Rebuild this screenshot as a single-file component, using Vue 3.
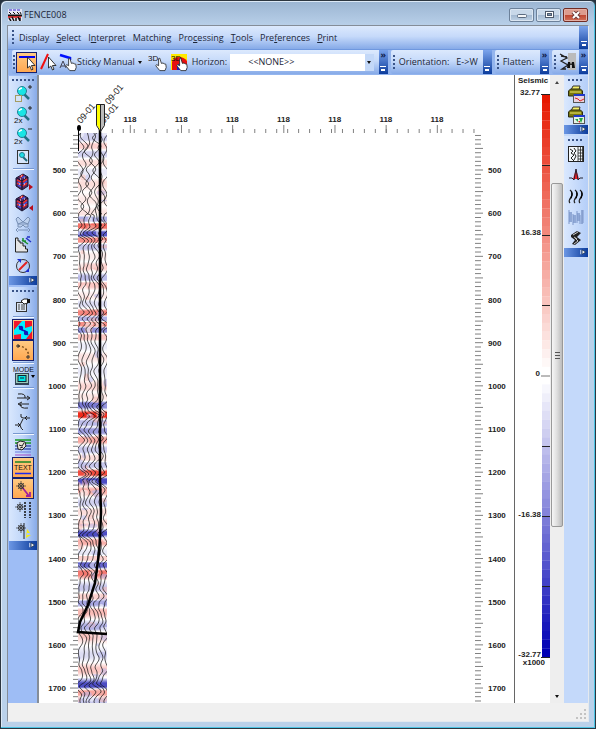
<template>
  <div class="window">
    <header class="titlebar">
      <svg class="logo" viewBox="0 0 14 12" v-html="icons.logo"></svg>
      <h1 class="title">FENCE008</h1>
      <button class="wbtn" aria-label="Minimize">
        <svg viewBox="0 0 12 8"><rect x="1.500" y="3.500" width="9" height="3" rx="1" fill="#f4f6f8" stroke="#5b6b80" /></svg>
      </button>
      <button class="wbtn" aria-label="Maximize">
        <svg viewBox="0 0 12 8"><rect x="2.500" y=".5" width="8" height="6" fill="#fff" stroke="#4d5a6c" /><rect x="4.500" y="2.500" width="4" height="2" fill="#7c93ad" stroke="#4d5a6c" /></svg>
      </button>
      <button class="wbtn close" aria-label="Close">
        <svg viewBox="0 0 12 8"><path d="M3 1l6 6M9 1L3 7" stroke="#6d3a38" stroke-width="4" /><path d="M3 1l6 6M9 1L3 7" stroke="#fff" stroke-width="2" /></svg>
      </button>
    </header>

    <div class="client">
      <nav class="menubar">
        <span class="grip"></span>
        <button v-for="m in menus" :key="m.join('')" class="menu">{{ m[0] }}<u>{{ m[1] }}</u>{{ m[2] }}</button>
        <button class="more" aria-label="Menu options"><i></i></button>
      </nav>

      <div class="toolrow">
        <div class="toolbar grow">
          <span class="grip"></span>
          <button class="tool on" aria-label="Pick horizon"><svg viewBox="0 0 18 18" v-html="icons.pick"></svg></button>
          <button class="tool" aria-label="Pick fault"><svg viewBox="0 0 18 18" v-html="icons.fault"></svg></button>
          <button class="tool sticky"><svg viewBox="0 0 18 18" v-html="icons.sticky"></svg>Sticky Manual<i class="down"></i></button>
          <button class="tool" aria-label="3D pick"><svg viewBox="0 0 18 18" v-html="icons.hand3d"></svg></button>
          <button class="tool" aria-label="3D map pick"><svg viewBox="0 0 18 18" v-html="icons.map3d"></svg></button>
          <label class="lbl" for="horizon">Horizon:</label>
          <span class="combo">
            <select id="horizon"><option>&lt;&lt;NONE&gt;&gt;</option></select>
            <i class="down"></i>
          </span>
          <button class="more" aria-label="More tools"><b>»</b><i></i></button>
        </div>
        <div class="toolbar">
          <span class="grip"></span>
          <button class="tool orient">Orientation:<span>E-&gt;W</span></button>
          <button class="more" aria-label="Orientation options"><i></i></button>
        </div>
        <div class="toolbar">
          <span class="grip"></span>
          <button class="tool flat">Flatten:</button>
          <button class="more" aria-label="Flatten options"><b>»</b><i></i></button>
        </div>
        <div class="toolbar">
          <span class="grip"></span>
          <button class="tool find" aria-label="Find"><svg viewBox="0 0 18 18" v-html="icons.find"></svg></button>
          <button class="more" aria-label="Find options"><b>»</b><i></i></button>
        </div>
      </div>

      <main class="body">
        <aside class="side left">
          <div v-for="(bar, b) in leftBars" :key="b" class="vbar">
            <span class="hgrip"></span>
            <template v-for="(name, i) in bar" :key="i">
              <hr v-if="name === '-'" />
              <button v-else class="vtool" :class="{ on: active.includes(name) }" :aria-label="name">
                <svg viewBox="0 0 18 18" v-html="icons[name]"></svg>
              </button>
            </template>
            <button class="vmore" aria-label="Toolbar options"><svg viewBox="0 0 8 8" v-html="icons.more"></svg></button>
          </div>
        </aside>

        <section class="chart">
          <svg viewBox="39 75 475 628">
            <defs>
              <linearGradient id="amp" gradientUnits="userSpaceOnUse" x1="0" y1="133" x2="0" y2="703">
                <stop v-for="(s, i) in stops" :key="i" :offset="s.at" :stop-color="s.color" />
              </linearGradient>
              <clipPath id="section"><rect x="78" y="133" width="29" height="570" /></clipPath>
            </defs>

            <g stroke="#808080">
              <path :d="sideTicks" />
              <path :d="topTicks" />
            </g>
            <g class="axis">
              <template v-for="v in depths" :key="v">
                <text x="66" :y="yOf(v) + 3" text-anchor="end">{{ v }}</text>
                <text x="488" :y="yOf(v) + 3">{{ v }}</text>
              </template>
              <text v-for="n in 7" :key="n" :x="130 + (n - 1) * 51.17" y="122" text-anchor="middle">118</text>
            </g>

            <g clip-path="url(#section)">
              <rect x="78" y="133" width="29" height="570" fill="url(#amp)" />
              <ellipse v-for="(s, i) in spots" :key="i" :cx="s.x" :cy="s.y" :rx="s.rx" :ry="s.ry" :fill="s.fill" opacity=".5" />
              <path v-for="(d, i) in traces" :key="i" :d="d" fill="none" stroke="#111" stroke-width=".7" />
            </g>

            <path d="M78.500 126v25" stroke="#000" />
            <ellipse cx="79" cy="128" rx="2" ry="3" />
            <g class="well-name">
              <text transform="translate(81 124) rotate(-50)">09-01</text>
              <text transform="translate(104 124) rotate(-50)">09-01</text>
              <text transform="translate(109 105) rotate(-50)">09-01</text>
            </g>
            <path d="M100 128V480L101 512L100 537L99 553L95 583L88 605L80 622L78 632L107 634" fill="none" stroke="#000" stroke-width="2.500" />
            <path d="M96.500 104.500h8v21l-4 6-4-6z" fill="#bbb" stroke="#222" />
            <path d="M97 105h3v25l-3-5z" fill="#ff0" />
            <path d="M100.500 105v26" stroke="#222" />
          </svg>
        </section>

        <section class="legend">
          <svg viewBox="515 75 35 628">
            <rect v-for="(c, i) in scale" :key="i" x="542" :y="94 + i * 8.8" width="8" height="9" :fill="c" />
            <path d="M541 94.500h9M542 165.500h8M542 235.500h8M542 305.500h8M542 446.500h8M542 516.500h8M542 586.500h8M541 657.500h9" stroke="#222" />
            <path d="M541 376h9" stroke="#777" />
            <g class="axis">
              <text x="518" y="83">Seismic</text>
              <text x="540" y="95" text-anchor="end">32.77</text>
              <text x="541" y="235" text-anchor="end">16.38</text>
              <text x="540" y="376" text-anchor="end">0</text>
              <text x="541" y="517" text-anchor="end">-16.38</text>
              <text x="541" y="657" text-anchor="end">-32.77</text>
              <text x="545" y="665" text-anchor="end">x1000</text>
            </g>
          </svg>
        </section>

        <div class="scroll">
          <button aria-label="Scroll up"><i class="up"></i></button>
          <div class="track"><div class="thumb"><span></span></div></div>
          <button aria-label="Scroll down"><i class="down"></i></button>
        </div>

        <aside class="side right">
          <div v-for="(bar, b) in rightBars" :key="b" class="vbar">
            <span class="hgrip"></span>
            <button v-for="name in bar" :key="name" class="vtool" :aria-label="name">
              <svg viewBox="0 0 18 18" v-html="icons[name]"></svg>
            </button>
            <button class="vmore" aria-label="Toolbar options"><svg viewBox="0 0 8 8" v-html="icons.more"></svg></button>
          </div>
        </aside>
      </main>

      <footer class="status">
        <svg viewBox="0 0 10 10"><path d="M8 0h2v2H8zM8 4h2v2H8zM8 8h2v2H8zM4 4h2v2H4zM4 8h2v2H4zM0 8h2v2H0z" fill="#c3c3c3" /></svg>
      </footer>
    </div>
  </div>
</template>

<script setup>
const menus = [
  ['', '', 'Display'], ['', 'S', 'elect'], ['I', 'n', 'terpret'], ['Matchin', 'g', ''],
  ['Pro', 'c', 'essing'], ['', 'T', 'ools'], ['Pre', 'f', 'erences'], ['', 'P', 'rint'],
]

const leftBars = [
  ['zoomArea', 'zoomIn', 'zoomOut', 'zoomFit', '-', 'cubeNext', 'cubePrev', 'flip', 'stairs', 'rotate'],
  ['props', '-', 'colour', 'arc', '-', 'mode', '-', 'swap', 'squeeze', '-', 'layers', 'text', 'wellPath', 'wellGrid', 'wellMark'],
]
const rightBars = [
  ['printLine', 'printMap'],
  ['sectionView', 'spike', 'wiggle', 'bars', 'fold'],
]
const active = ['colour', 'arc', 'text', 'wellPath']

// small pieces shared by several icons
const hand = '<path transform="translate(4 4) scale(.8)" d="M8.500 17l-5-6 1-1.500 2.500 1.500V2l1.500-.5L10.500 8l2-.5 1.500 1 2 .5.5 4-1.500 4z" fill="#fff" stroke="#222"/>'
const arrow = '<path d="M9.500 4v11l2.300-2 1.700 4 1.500-.8-1.600-3.700H17z" fill="#fff" stroke="#222" stroke-width=".9"/>'
const lens = '<path d="M10 9l5 5" stroke="#237085" stroke-width="2.500"/><circle cx="8" cy="6" r="4.500" fill="#19e5e5" stroke="#257f92"/><path d="M5 5q1-2 3-2" stroke="#fff" stroke-width="1.500" fill="none"/>'
const cube = '<path d="M2 5l7-4 5 3v9l-6 4-6-4z" fill="#53265f" stroke="#161632"/><path d="M3 5l5 3v8M8 8l6-4" stroke="#101028" fill="none"/><path d="M3 7l4 2M3 10l4 2M9 9l4-3M9 13l4-3M6 4l3-2" stroke="#e33131" stroke-width="1.600"/><path d="M4 9l3 2M9 11l4-3M8 5l3-2M4 12l3 2" stroke="#3d57ea" stroke-width="1.200"/><path d="M6 6h1M10 5h1M5 11h1M10 11h1M7 3h1" stroke="#fff"/>'
const gun = (x, y) => `<circle cx="${x}" cy="${y}" r="2.500" fill="none" stroke="#333"/><path d="M${x - 5} ${y}h10M${x} ${y - 5}v10M${x - 3} ${y - 3}l6 6M${x + 3} ${y - 3}l-6 6" stroke="#333" stroke-width=".7"/>`
const printer = '<path d="M4 5l2-4h7l-1 4" fill="#f5f06b" stroke="#333"/><path d="M1.500 6l2-2h10l2 2v5h-14z" fill="#77760f" stroke="#2b2b12"/><path d="M3 7h11" stroke="#f7f16a"/>'
const t = (x, y, size, s, fill = '#111') => `<text x="${x}" y="${y}" font-family="Liberation Sans, sans-serif" font-size="${size}" fill="${fill}">${s}</text>`

const icons = {
  logo: '<rect width="14" height="12" fill="#e6e6f6"/><path d="M1 1h12" stroke="#32c" stroke-dasharray="3 1"/><path d="M1 3l2 2M5 3l2 2M9 3l2 2M12 3l1 2" stroke="#111"/><path d="M0 6.500h14" stroke="#111" stroke-width="2"/><path d="M0 8h13" stroke="#d11" stroke-width="1.500"/><path d="M1 9l2 3M4 8l2 4M8 9v3M10 8l2 4M12 9v3" stroke="#111" stroke-width="1.500"/>',
  pick: '<path d="M1 4h16" stroke="#0000f0" stroke-width="2"/>' + arrow,
  fault: '<path d="M2 16L9 1" stroke="#f01010" stroke-width="2"/>' + arrow,
  sticky: '<path d="M1 2l10 3v2" stroke="#0010ff" stroke-width="2.500" fill="none"/><path d="M1 15l3-7 3 7M2 13h4" stroke="#445" fill="none"/>' + hand,
  hand3d: t(-1, 8, 8, '3D') + hand,
  map3d: '<path d="M1 1h16v16H1z" fill="#ffea00"/><path d="M2 17V9q2-5 7-5t8 4v9z" fill="#e81010"/><path d="M7 17v-4q2-4 6-2l4 3v3z" fill="#1b18c8"/>' + t(1, 8, 8, '3D') + hand,
  find: '<rect x="9" y="0" width="8" height="17" fill="#bbb"/><path d="M1 1l7 4-6 3 7 4-6 4h4M2 3l6 1" stroke="#222" fill="none" stroke-width="1.300"/><path d="M8 15l1-6h2l1 3 1-3h2l1 6h-3v-3h-2v3z" fill="#111"/>',
  more: '<path d="M1.500 1v5" stroke="#fff"/><path d="M3 1l4 2.500L3 6z" fill="#fff" stroke="#123" stroke-width=".7"/>',
  zoomArea: lens + '<path d="M14 2h4M16 0v4" stroke="#222"/><rect x="1.500" y="10.500" width="6" height="6" fill="#d4e3f5" stroke="#a59c62"/>',
  zoomIn: lens + '<path d="M14 2h4M16 0v4" stroke="#222"/>' + t(0, 17, 8, '2x'),
  zoomOut: lens + '<path d="M14 2h4" stroke="#222"/>' + t(0, 17, 8, '2x'),
  zoomFit: '<rect x="3.500" y="2.500" width="11" height="13" fill="#d7e6fa" stroke="#333"/><path d="M9 9l4 4" stroke="#206a7c" stroke-width="2"/><circle cx="8" cy="7" r="2.500" fill="#20dfe8" stroke="#257f92"/>',
  cubeNext: cube + '<path d="M15 11l4 3-4 3z" fill="#b80e1d"/>',
  cubePrev: cube + '<path d="M19 11l-4 3 4 3z" fill="#b80e1d"/>',
  flip: '<path d="M9 7L4 2 2 4l2 5 5-2 5 2 2-5-2-2zM7 9H4v3h3l2-2 2 2h3V9h-3z" fill="#bdd1ee" stroke="#7890b5"/><path d="M4 15h10M4 13l-2 2 2 2M14 13l2 2-2 2" fill="none" stroke="#7890b5"/>',
  stairs: '<path d="M1.500 2v14h12v-3h-2v-3H9V7H6V5H4V2z" fill="#e5e5e5" stroke="#222"/><path d="M8 4l6 4M9 2v3h3" stroke="#1c8e2d" stroke-width="1.500" fill="none"/><path d="M12 2l5 4M13 1h3" stroke="#2232c8" stroke-width="1.500"/>',
  rotate: '<circle cx="9" cy="9" r="6.500" fill="none" stroke="#333"/><path d="M5 13l8-8" stroke="#e32222" stroke-width="2"/><path d="M3 2h4v4zM11 15h4v-4z" fill="#1a2bd2"/>',
  props: '<rect x="2.500" y="6.500" width="10" height="9" fill="#dce6f3" stroke="#333"/><path d="M4 9h2M7 9h4M4 11h2M7 11h4M4 13h2M7 13h4" stroke="#444"/><path d="M7 5l3-2h4v4l-4 1-2-2z" fill="#fff" stroke="#222"/><path d="M13 3h3v4h-3z" fill="#111"/>',
  colour: '<path d="M0 0h18v18H0z" fill="#00efff"/><path d="M0 0h8L0 9zM18 0v5l-7 2V0zM0 18v-4l7-1v5zM18 10l-6 8h6z" fill="#f0142c"/><path d="M5 5l3 4 3 1 3 4" stroke="#101bb8" stroke-width="1.500"/><circle cx="7" cy="7" r="2.200" fill="#101bb8"/><circle cx="12" cy="12" r="2.200" fill="#101bb8"/>',
  arc: '<path d="M4 4q9 0 11 10" fill="none" stroke="#7a4b19" stroke-dasharray="2 2" stroke-width="1.500"/><path d="M3 3h2v2H3zM13 14h2v2h-2z" fill="none" stroke="#333"/>',
  mode: t(-1, 5, 7, 'MODE') + '<rect x="1" y="6" width="14" height="12" fill="#345"/><rect x="2" y="7" width="12" height="9" fill="#9cb"/><rect x="4" y="8.500" width="8" height="6" fill="#00e5e5" stroke="#123"/><path d="M6 11h4" stroke="#123"/><path d="M17 8h4l-2 3z"/>',
  swap: '<path d="M4 2q8-1 7 4H3M15 6h-4M13 4l3 2-3 2M14 16q-8 1-8-4h9M8 10l-4 2 4 2" fill="none" stroke="#222"/>',
  squeeze: '<path d="M7 1q-1 4 2 4h7M13 3l-2 2 2 2M9 6l-3 6q1 4 3 5M1 12h5M4 10l2 2-2 2" fill="none" stroke="#222"/>',
  layers: '<path d="M1 2h16M1 5h16" stroke="#16991f" stroke-width="1.500"/><path d="M1 8h16M1 11h16" stroke="#0a1f93"/><path d="M1 14h16" stroke="#6d7ce0"/><path d="M1 17h16" stroke="#a34bc4"/><path d="M3 5l3-2 5 1 1 4-4 4-4-1z" fill="#e7e2d6" stroke="#222"/><path d="M5 7l3 1 2-3M6 10l3-1" stroke="#222" fill="none"/>',
  text: '<path d="M1 3h16" stroke="#188422" stroke-width="1.500"/>' + t(0, 11, 7, 'TEXT') + '<path d="M1 14.500h16" stroke="#1b27f0" stroke-width="1.500"/>',
  wellPath: '<path d="M8 7l7 9M12 16h4v-4" stroke="#a0209e" stroke-width="1.800" fill="none"/>' + gun(7, 6),
  wellGrid: gun(6, 6) + '<path d="M11 1v16M16 1v16" stroke="#111" stroke-width="1.500" stroke-dasharray="2 1"/>',
  wellMark: '<path d="M13 7l3 4h-3v2h4l-5 3z" fill="#f6ea10"/>' + gun(7, 6) + '<path d="M10 1v16" stroke="#222"/>',
  printLine: printer + '<rect x="6.500" y="9.500" width="11" height="8" fill="#e8d2de" stroke="#555"/><path d="M7 10h11" stroke="#2039c8" stroke-width="2"/><path d="M8 13l3 1 2 2 4-2" stroke="#d22" fill="none"/>',
  printMap: printer + '<rect x="6.500" y="9.500" width="11" height="8" fill="#e6f2e6" stroke="#555"/><path d="M7 10h11" stroke="#2039c8" stroke-width="2"/><path d="M8 13h3v3zM12 12h4l-2 5z" fill="#21a544"/><path d="M11 15h2v2z" fill="#d22"/>',
  sectionView: '<rect x="1.500" y="1.500" width="15" height="15" fill="#f4f8fb" stroke="#222"/><path d="M3 4l3 2-2 2 3 2-3 3 3 3M7 3l2 3-2 2 2 3-2 4" stroke="#222" fill="none"/><path d="M11 2v14M13.500 2v14M15.500 2v14M11 5h5M11 8h5M11 11h5M11 14h5" stroke="#222" stroke-width=".8"/>',
  spike: '<path d="M6 13l3-10 3 10z" fill="#ec1a22"/><path d="M2 12h3l2 2 2-11 2 11 2-2h3" fill="none" stroke="#223"/>',
  wiggle: '<path d="M3 3q4 3 1 7t-1 6M8 3q4 3 1 7t-1 6M13 3q4 3 1 7t-1 6" stroke="#222" fill="none" stroke-width="1.200"/><path d="M4 4q4 4-1 9 2-5 1-9zM9 4q4 4-1 9 2-5 1-9zM14 4q4 4-1 9 2-5 1-9z"/>',
  bars: '<path d="M2 4h3v10H2zM6 7h3v8H6zM10 5h3v8h-3zM14 2h2v14h-2z" fill="#8fa8d6"/><path d="M2 2v14M6 6v11M10 3v12M13 7v9M16 2v13" stroke="#7c96c9"/>',
  fold: '<path d="M4 6l6-4 4 2-4 4 4 3-6 5-3-1 3-4-4-3z" fill="#222"/><path d="M6 6l5-3M8 9l3 3-4 3M7 8l3 2" stroke="#c8c8c8" fill="none"/>',
}

const yOf = v => 170 + (v - 500) * 0.4317
const depths = Array.from({ length: 13 }, (_, i) => 500 + i * 100)

let sideTicks = ''
for (let v = 420; v <= 1730; v += 10) {
  const y = yOf(v)
  const major = v % 50 === 0
  sideTicks += `M${major ? 70 : 73} ${y}H78M475 ${y}h${major ? 8 : 6}`
}

let topTicks = ''
for (let i = 0; i < 34; i++) topTicks += `M${112.3 + i * 10.96} 129v4`
for (let i = 0; i < 7; i++) topTicks += `M${130.3 + i * 51.17} 125v8`

// reflectors down the section: [y, amplitude], positive is red
const bands = [
  [138, -.2], [146, .2], [154, -.2], [163, .15], [172, -.1], [184, .15], [200, .1], [213, .12], [219, -.35],
  [226, .65], [234, -.75], [240, .5], [247, -.25], [256, .08], [267, .2], [278, -.3], [285, .25], [296, .08], [304, -.15],
  [313, .55], [319, -.35], [324, .5], [330, -.5], [337, .25], [346, -.08], [357, .12], [371, -.1], [387, .18], [397, .1],
  [405, -.6], [415, .95], [423, -.3], [431, -.45], [440, .4], [450, -.25], [458, .15], [465, -.25],
  [473, .8], [481, -.8], [491, .35], [503, -.2], [512, .15], [523, .2], [534, -.8], [542, .35],
  [553, -.1], [558, .2], [565, -.7], [573, .6], [588, -.25], [597, .2], [603, -.4], [612, .3], [627, -.35],
  [636, .2], [655, -.15], [670, .25], [685, -.8], [693, .4], [701, -.25],
]

function tone(a) {
  const k = Math.abs(a)
  const r = a > 0 ? [238, 32, 16] : [32, 32, 180]
  return `rgb(${r.map(c => Math.round(255 - (255 - c) * k)).join(',')})`
}

const stops = []
bands.forEach(([y, a], i) => {
  stops.push({ at: (y - 2 - 133) / 570, color: tone(a) }, { at: (y + 2 - 133) / 570, color: tone(a) })
  const next = bands[i + 1]
  if (next) stops.push({ at: ((y + next[0]) / 2 - 133) / 570, color: '#fff' })
})

let seed = 7
const rnd = () => (seed = (seed * 16807) % 2147483647) / 2147483647

const spots = Array.from({ length: 130 }, () => ({
  x: 78 + rnd() * 29,
  y: 133 + rnd() * 570,
  rx: 2 + rnd() * 3,
  ry: 1 + rnd() * 3,
  fill: ['#ffffff', '#f6b4ae', '#b4b4ea'][Math.floor(rnd() * 3)],
}))

function deflect(y, i) {
  let s = 0
  for (const [by, a] of bands) {
    const d = (y - by - Math.sin(i * 0.9 + by) * 1.2) / 3
    if (Math.abs(d) < 3) s += a * Math.exp(-d * d)
  }
  const messy = y < 215 ? 2.4 : 1.2
  return s * 5 + messy * Math.sin(y / 2.9 + i * (y < 215 ? 1.9 : 0.4) + Math.sin(y / 17 + i)) + 1.4 * Math.sin(y / 5.3 - i * (y < 215 ? 2 : 0.7))
}

const traces = Array.from({ length: 7 }, (_, i) => {
  let d = ''
  for (let y = 133; y <= 703; y++) d += `${d ? 'L' : 'M'}${(80 + i * 4.2 + deflect(y, i)).toFixed(1)} ${y}`
  return d
})

const levels = 32
const scale = Array.from({ length: levels * 2 }, (_, i) => {
  const red = i < levels
  const k = red ? 1 - i / (levels - 1) : (i - levels) / (levels - 1)
  const base = red ? [230, 24, 0] : [0, 0, 180]
  return `rgb(${base.map(c => Math.round(255 - (255 - c) * k)).join(',')})`
})
</script>

<style>
body { background: #25313d; }
</style>

<style scoped>
* { box-sizing: border-box; }
button {
  border: 0;
  padding: 0;
  margin: 0;
  background: none;
  font: inherit;
  color: inherit;
}
.window {
  display: flex;
  flex-direction: column;
  min-height: 100vh;
  padding: 0 6px 6px;
  border: 1px solid #2c3640;
  border-radius: 6px 6px 0 0;
  background: linear-gradient(#9bb5d2, #bad1ea 26px, #bad1ea);
  box-shadow: inset -1px -1px #4cc4e4, inset 1px 1px #dce9f6;
  font-family: "Open Sans", "Noto Sans", sans-serif;
  font-size: 9px;
  line-height: 14px;
  color: #1c2638;
}
.titlebar {
  display: flex;
  align-items: center;
  gap: 2px;
  height: 24px;
  padding: 3px 1px 0;
}
.logo { width: 14px; height: 12px; }
.title {
  flex: 1;
  margin: 0;
  font-size: 9px;
  font-weight: 400;
}
.wbtn {
  display: flex;
  align-items: center;
  justify-content: center;
  width: 25px;
  height: 14px;
  border: 1px solid #6c819a;
  border-radius: 2px;
  background: linear-gradient(#c8d8e9 50%, #a2b8d0 50%, #bfd2e6);
  box-shadow: inset 0 0 0 1px #dbe6f2;
}
.wbtn svg { width: 12px; height: 8px; }
.close {
  border-color: #712c24;
  background: linear-gradient(#dd9c8e 50%, #bf4630 50%, #d0715a);
  box-shadow: inset 0 0 0 1px #e4b0a6;
}
.client {
  display: flex;
  flex: 1;
  flex-direction: column;
  border: 1px solid #858d98;
  border-color: #858d98 #e4e9ef #e4e9ef #858d98;
  background: #f0f0f0;
}
.menubar, .toolbar {
  display: flex;
  align-items: center;
  height: 24px;
  background: linear-gradient(#dce9fd, #c6dafa 45%, #86aae8);
}
.menubar {
  gap: 7px;
  padding-left: 4px;
  border-bottom: 1px solid #6f98df;
}
.menu { padding: 0; }
.grip {
  flex: none;
  width: 2px;
  height: 15px;
  background: repeating-linear-gradient(#3a5488 0 2px, transparent 2px 4px);
}
.menubar .grip { margin-right: -2px; }
.more {
  display: flex;
  flex: none;
  flex-direction: column;
  justify-content: space-between;
  align-items: center;
  align-self: stretch;
  width: 9px;
  margin-left: auto;
  padding: 1px 0 3px;
  background: linear-gradient(#7ba4ec, #0c3c9c);
  color: #10204a;
  line-height: 8px;
}
.more i {
  width: 6px;
  height: 5px;
  margin-top: auto;
  border-top: 1px solid #fff;
  background: linear-gradient(#fff, #fff) 50% 2px / 4px 2px no-repeat;
}
.toolrow {
  display: flex;
  gap: 3px;
  padding: 0 0 1px 4px;
  background: #94b5ee;
}
.toolbar { border-radius: 2px; }
.grow { flex: 1; min-width: 0; }
.tool {
  display: flex;
  align-items: center;
  justify-content: center;
  height: 21px;
  flex: none;
  width: 21px;
}
.tool svg, .vtool svg { width: 18px; height: 18px; flex: none; overflow: visible; }
.on {
  border: 1px solid #17216f;
  background: linear-gradient(#ffca83, #ffa851);
}
.sticky { width: auto; padding: 0 6px 0 1px; white-space: nowrap; }
.down, .up {
  width: 0;
  height: 0;
  border: 2px solid transparent;
}
.down { border-top: 3px solid #111; border-bottom: 0; }
.up { border-bottom: 3px solid #444; border-top: 0; }
.sticky .down { margin-left: 3px; }
.lbl { padding: 0 3px 0 2px; }
.combo {
  display: grid;
  flex: 1;
  min-width: 0;
  height: 17px;
  margin-right: 5px;
  background: linear-gradient(90deg, #fff calc(100% - 9px), #c3d8f8 0);
  align-items: center;
}
.combo > * { grid-area: 1 / 1; }
.combo .down { justify-self: end; margin-right: 3px; pointer-events: none; }
select {
  appearance: none;
  width: 100%;
  height: 17px;
  padding: 0 0 0 18px;
  border: 0;
  background: none;
  font: inherit;
  color: inherit;
}
.toolbar .grip { margin-left: 2px; }
.grow .grip { margin: 0 1px; }
.orient { width: auto; gap: 7px; padding: 0 5px 0 4px; }
.flat { width: auto; padding: 0 6px 0 4px; }
.find { width: 23px; }
.body {
  display: flex;
  flex: 1;
  background: #fff;
}
.side { display: flex; flex: none; flex-direction: column; }
.left {
  width: 31px;
  padding: 1px 0 0 1px;
  gap: 2px;
  border-right: 2px solid #858d98;
  background: #9ebdf5;
}
.right { width: 24px; padding-top: 1px; gap: 2px; background: #c4d9fa; }
.vbar {
  display: flex;
  flex-direction: column;
  align-items: center;
  background: linear-gradient(90deg, #d8e7fd, #c0d6f9 50%, #88abe8);
}
.right .vbar { background: linear-gradient(90deg, #dae8fe, #b4cef8); }
.hgrip {
  width: 22px;
  height: 2px;
  margin: 3px 0 2px;
  background: repeating-linear-gradient(90deg, #3a5488 0 2px, transparent 2px 4px);
}
.right .hgrip { width: 16px; }
.vtool {
  display: flex;
  align-items: center;
  justify-content: center;
  width: 22px;
  height: 21px;
}
hr {
  width: 21px;
  height: 2px;
  margin: 1px 0;
  border: 0;
  border-top: 1px solid #7798d0;
  background: #f2f7ff;
}
.vmore {
  display: flex;
  justify-content: flex-end;
  align-items: center;
  align-self: stretch;
  height: 9px;
  padding-right: 1px;
  background: linear-gradient(90deg, #6c97e4, #0c3c9c);
}
.vmore svg { width: 8px; height: 7px; }
.chart { flex: 1; min-width: 0; border-right: 1px solid #666; }
.chart svg, .legend svg { display: block; width: 100%; }
.legend { flex: none; width: 35px; }
.axis, .well-name {
  font-family: "Liberation Sans", Arial, sans-serif;
  font-size: 8px;
  fill: #222;
}
.axis { font-weight: 700; }
.well-name { font-size: 9px; }
.scroll {
  display: flex;
  flex: none;
  flex-direction: column;
  width: 14px;
  padding: 0 1px;
  background: #eee;
}
.scroll button {
  display: flex;
  align-items: center;
  justify-content: center;
  height: 14px;
}
.track { display: flex; flex: 1; flex-direction: column; padding-top: 94px; }
.thumb {
  display: flex;
  align-items: center;
  justify-content: center;
  height: 68%;
  border: 1px solid #999;
  border-radius: 2px;
  background: linear-gradient(90deg, #f6f6f6, #dedede 50%, #bcbcbc);
}
.thumb span {
  width: 5px;
  height: 7px;
  background: repeating-linear-gradient(#555 0 1px, transparent 1px 3px);
}
.status {
  display: flex;
  justify-content: flex-end;
  align-items: flex-end;
  height: 18px;
  padding: 0 2px 2px;
}
.status svg { width: 10px; height: 10px; }
</style>
